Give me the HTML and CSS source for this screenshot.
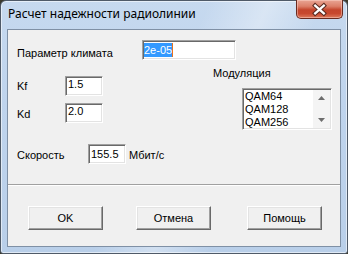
FILE: index.html
```html
<!DOCTYPE html>
<html>
<head>
<meta charset="utf-8">
<link rel="stylesheet" href="styles.css">
</head>
<body>
<div class="window">
  <div class="titlebar">
    <span class="title">Расчет надежности радиолинии</span>
    <div class="close">
      <svg width="47" height="19" viewBox="0 0 47 19">
        <path d="M19 5.5 L28 13.5 M28 5.5 L19 13.5" stroke="#5a2a20" stroke-width="4.6" stroke-linecap="square" fill="none"/>
        <path d="M19 5.5 L28 13.5 M28 5.5 L19 13.5" stroke="#ffffff" stroke-width="2.4" stroke-linecap="square" fill="none"/>
      </svg>
    </div>
  </div>
  <div class="client">
    <div class="row row-param">
      <span class="lbl lbl-param">Параметр климата</span>
      <div class="edit edit-param"><span class="sel">2e-05</span><span class="caret"></span></div>
    </div>
    <div class="middle">
      <div class="kcol">
        <div class="field field-kf">
          <span class="lbl lbl-k lbl-kf">Kf</span>
          <div class="edit edit-k">1.5</div>
        </div>
        <div class="field field-kd">
          <span class="lbl lbl-k lbl-kd">Kd</span>
          <div class="edit edit-k">2.0</div>
        </div>
      </div>
      <div class="modcol">
        <div class="modlabel">Модуляция</div>
        <div class="listbox">
          <div class="items">
            <div class="item">QAM64</div>
            <div class="item">QAM128</div>
            <div class="item">QAM256</div>
          </div>
          <div class="vscroll">
            <svg width="7" height="4" viewBox="0 0 7 4"><path d="M3.5 0 L7 4 L0 4 Z" fill="#6d6d6d"/></svg>
            <svg width="7" height="4" viewBox="0 0 7 4"><path d="M0 0 L7 0 L3.5 4 Z" fill="#6d6d6d"/></svg>
          </div>
        </div>
      </div>
    </div>
    <div class="row row-speed">
      <span class="lbl lbl-speed">Скорость</span>
      <div class="edit edit-speed">155.5</div>
      <span class="lbl unit">Мбит/с</span>
    </div>
    <div class="sep"></div>
    <div class="buttons">
      <button class="btn btn-ok">OK</button>
      <button class="btn btn-cancel">Отмена</button>
      <button class="btn btn-help">Помощь</button>
    </div>
  </div>
</div>
</body>
</html>
```

FILE: styles.css
```css
* { box-sizing: border-box; }
html, body { margin: 0; padding: 0; }
body {
  width: 348px;
  height: 254px;
  overflow: hidden;
  background: #3c3a2c;
}
.window {
  width: 348px;
  height: 254px;
  border: 1px solid #4f5a68;
  border-radius: 6px 6px 3px 3px;
  background:
    linear-gradient(115deg, rgba(255,255,255,0) 45%, rgba(255,255,255,0.35) 58%, rgba(255,255,255,0) 70%),
    linear-gradient(180deg, #c6d9ef 0%, #bfd4ed 40%, #b9cfe9 100%);
  box-shadow: inset 0 0 0 1px rgba(255,255,255,0.55);
  display: flex;
  flex-direction: column;
}
.titlebar {
  height: 28px;
  display: flex;
  justify-content: space-between;
  align-items: flex-start;
}
.title {
  padding: 5px 0 0 7px;
  font-family: "Noto Sans", sans-serif;
  font-size: 12px;
  line-height: 16px;
  color: #000;
}
.close {
  width: 47px;
  height: 19px;
  margin: -1px 4px 0 0;
  border: 1px solid #6a2b20;
  border-top: none;
  border-radius: 0 0 5px 5px;
  background: linear-gradient(180deg, #e9a594 0%, #dc7f69 35%, #c4452c 55%, #c8482e 75%, #dd7a5c 100%);
  box-shadow: inset 0 0 0 1px rgba(255,220,210,0.45);
  display: flex;
}
.client {
  flex: 1;
  margin: 0 6px 6px 6px;
  border: 1px solid #7f90a5;
  background: #f0f0f0;
  font-family: "Liberation Sans", Arial, sans-serif;
  font-size: 11px;
  color: #000;
}
.row, .field {
  display: flex;
  align-items: flex-start;
}
.row { padding-left: 9px; }
.lbl { line-height: 13px; white-space: nowrap; }
.edit {
  height: 20px;
  background: #fff;
  border: 1px solid;
  border-color: #a0a0a0 #ffffff #ffffff #a0a0a0;
  box-shadow: inset 1px 1px 0 #696969, inset -1px -1px 0 #e3e3e3;
  padding: 1px 0 0 2px;
  line-height: 13px;
  white-space: nowrap;
}
.row-param { margin-top: 10px; }
.lbl-param { width: 125px; margin-top: 7px; }
.edit-param { width: 94px; padding: 2px 0 0 1px; display: flex; align-items: flex-start; }
.sel {
  display: inline-block;
  background: #3399ff;
  color: #fff;
  line-height: 14px;
  height: 14px;
}
.caret {
  display: inline-block;
  width: 1px;
  height: 14px;
  background: #e8731c;
}
.middle {
  display: flex;
  align-items: flex-start;
  padding-left: 9px;
}
.kcol { width: 86px; }
.field-kf { margin-top: 16px; }
.field-kd { margin-top: 7px; }
.lbl-k { width: 48px; }
.lbl-kf { margin-top: 4px; }
.lbl-kd { margin-top: 5px; }
.edit-k { width: 38px; }
.modcol { margin-left: 110px; padding-top: 7px; }
.modlabel { line-height: 13px; }
.listbox {
  margin-top: 8px;
  margin-left: 29px;
  width: 90px;
  height: 42px;
  display: flex;
  background: #fff;
  border: 1px solid;
  border-color: #a0a0a0 #ffffff #ffffff #a0a0a0;
  box-shadow: inset 1px 1px 0 #696969, inset -1px -1px 0 #e3e3e3;
  padding: 1px 1px 1px 1px;
}
.items {
  flex: 1;
  overflow: hidden;
  padding-left: 1px;
}
.item { line-height: 13px; height: 13px; white-space: nowrap; }
.vscroll {
  width: 17px;
  background: #f4f4f4;
  display: flex;
  flex-direction: column;
  justify-content: space-between;
  align-items: center;
  padding: 6px 0 6px 0;
}
.vscroll svg { display: block; }
.row-speed { margin-top: 14px; }
.lbl-speed { width: 71px; margin-top: 5px; }
.edit-speed { width: 38px; padding-top: 3px; }
.unit { margin-left: 3px; margin-top: 5px; }
.sep {
  margin-top: 20px;
  height: 2px;
  border-top: 1px solid #a0a0a0;
  border-bottom: 1px solid #ffffff;
}
.buttons {
  display: flex;
  padding-left: 20px;
  margin-top: 20px;
}
.btn {
  width: 75px;
  height: 24px;
  margin: 0;
  padding: 0;
  font-family: "Liberation Sans", Arial, sans-serif;
  font-size: 11px;
  color: #000;
  background: #f0f0f0;
  border: 1px solid;
  border-color: #ffffff #696969 #696969 #ffffff;
  box-shadow: inset -1px -1px 0 #a0a0a0, inset 1px 1px 0 #e3e3e3;
  border-radius: 0;
}
.btn-cancel { margin-left: 33px; }
.btn-help { margin-left: 36px; }
```
